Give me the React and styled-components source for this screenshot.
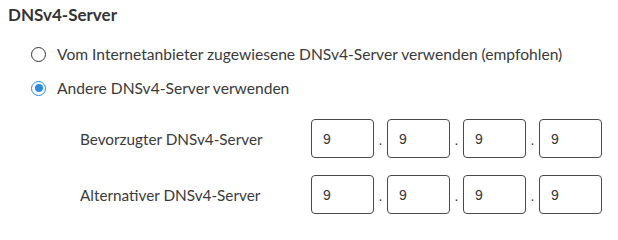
import React from "react";
import styled, { createGlobalStyle } from "styled-components";

const Global = createGlobalStyle`
  html, body { margin: 0; padding: 0; background: #fff; }
  body { font-family: Lato, "Noto Sans", sans-serif; color: #3a3a3a; }
`;

const Page = styled.div`
  width: 618px;
  height: 225px;
  box-sizing: border-box;
  padding: 5px 0 0 8px;
`;

const Title = styled.h2`
  margin: 0;
  font-size: 17px;
  line-height: 20px;
  font-weight: 700;
  color: #333;
`;

const RadioGroup = styled.div`
  display: flex;
  flex-direction: column;
  gap: 14px;
  padding: 19px 0 0 23px;
`;

const RadioRow = styled.label`
  display: flex;
  align-items: center;
  gap: 11px;
  height: 20px;
  font-size: 15.6px;
  color: #3a3a3a;
`;

const Circle = styled.span`
  box-sizing: border-box;
  flex: none;
  width: 15px;
  height: 15px;
  border-radius: 50%;
  border: 1.8px solid ${(p) => (p.$checked ? "#2d8ce0" : "#333")};
  display: flex;
  align-items: center;
  justify-content: center;
  &::after {
    content: "";
    display: ${(p) => (p.$checked ? "block" : "none")};
    width: 8px;
    height: 8px;
    border-radius: 50%;
    background: #2d8ce0;
  }
`;

const Fields = styled.div`
  display: flex;
  flex-direction: column;
  gap: 17px;
  padding: 21px 0 0 72px;
`;

const FieldRow = styled.div`
  display: flex;
  align-items: center;
`;

const FieldLabel = styled.span`
  width: 231px;
  font-size: 15.3px;
  color: #3a3a3a;
`;

const Octets = styled.div`
  display: flex;
  align-items: center;
`;

const Octet = styled.div`
  box-sizing: border-box;
  width: 63px;
  height: 39px;
  border: 1.5px solid #4a4a4a;
  border-radius: 4px;
  display: flex;
  align-items: center;
  padding-left: 11px;
  font-family: "Liberation Sans", Arial, sans-serif;
  font-size: 14px;
  color: #333;
`;

const Dot = styled.span`
  width: 13px;
  text-align: center;
  font-family: "Liberation Sans", Arial, sans-serif;
  font-size: 14px;
  line-height: 14px;
  padding-top: 2px;
  color: #333;
`;

function IpInput({ values }) {
  return (
    <Octets>
      {values.map((v, i) => (
        <React.Fragment key={i}>
          {i > 0 && <Dot>.</Dot>}
          <Octet>{v}</Octet>
        </React.Fragment>
      ))}
    </Octets>
  );
}

export default function App() {
  return (
    <>
      <Global />
      <Page>
        <Title>DNSv4-Server</Title>
        <RadioGroup>
          <RadioRow>
            <Circle />
            Vom Internetanbieter zugewiesene DNSv4-Server verwenden (empfohlen)
          </RadioRow>
          <RadioRow>
            <Circle $checked />
            Andere DNSv4-Server verwenden
          </RadioRow>
        </RadioGroup>
        <Fields>
          <FieldRow>
            <FieldLabel>Bevorzugter DNSv4-Server</FieldLabel>
            <IpInput values={["9", "9", "9", "9"]} />
          </FieldRow>
          <FieldRow>
            <FieldLabel>Alternativer DNSv4-Server</FieldLabel>
            <IpInput values={["9", "9", "9", "9"]} />
          </FieldRow>
        </Fields>
      </Page>
    </>
  );
}
